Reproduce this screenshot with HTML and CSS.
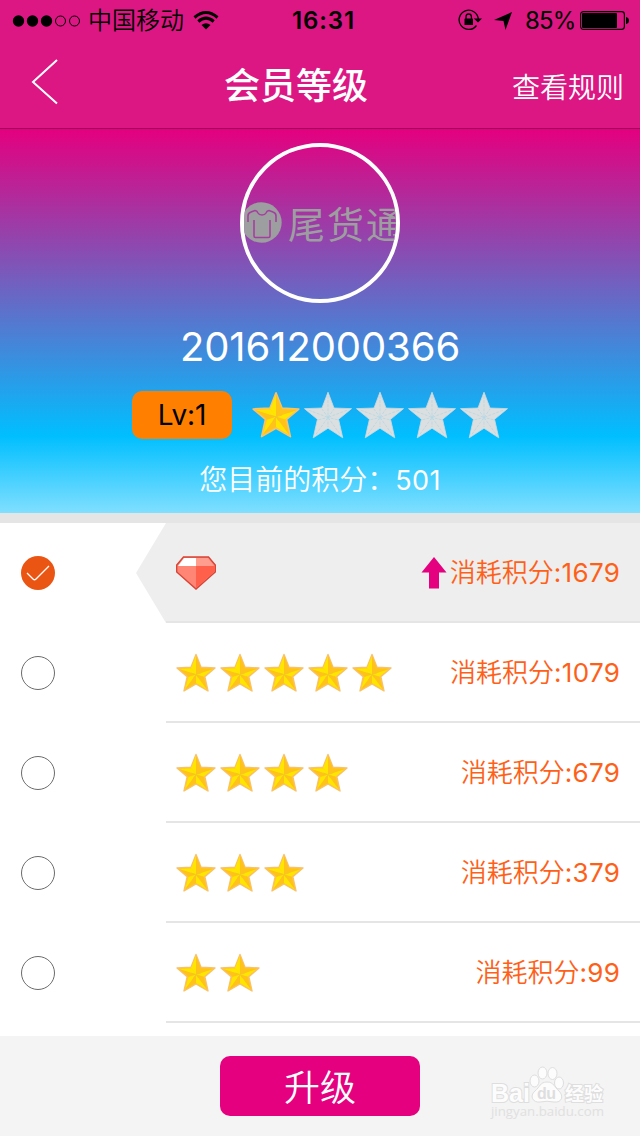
FILE: index.html
```html
<!DOCTYPE html>
<html lang="zh-CN">
<head>
<meta charset="utf-8">
<title>会员等级</title>
<link rel="stylesheet" href="styles.css">
</head>
<body>
<svg class="defs" width="0" height="0">
  <symbol id="star" viewBox="0 0 40 40">
    <path d="M20 1.500 25 14.200 39 15 28.800 23.600 32 38 20 31 8 38 11.200 23.600 1 15 15 14.200Z" fill="#ffcb12" stroke="#fac06a" stroke-width="1.400" stroke-linejoin="round"/>
    <path d="M20 3V21.500L15 15ZM37 16 20 21.500 27.500 23.500ZM31 36.500 20 21.500V30ZM9 36.500 20 21.500 12.500 24ZM3 16 20 21.500 15.500 15.300Z" fill="#ffe500"/>
    <path d="M20 3V21.500L25 15ZM37 16 20 21.500 25 15.300ZM31 36.500 20 21.500 27.500 24ZM9 36.500 20 21.500V30ZM3 16 20 21.500 12.500 23.500Z" fill="#ffc21a"/>
    <path d="M15 20 20 21.500 25 20M20 21.500 22.500 25M20 21.500 17.500 25" fill="none" stroke="#f0c826" stroke-width=".8"/>
  </symbol>
  <symbol id="star-off" viewBox="0 0 40 40">
    <path d="M20 1 25 14.200 39.600 14.700 28.800 23.600 32.300 39 20 31 7.700 39 11.200 23.600.4 14.700 15 14.200Z" fill="#dcdfe0" stroke="#c9d9e0" stroke-width=".7"/>
    <path d="M20 4V22L15 15M20 22 25 15M4 16 20 22 36 16M12 24 20 22 28 24M10 36 20 22 30 36M20 22V30" fill="none" stroke="#b9d8e5" stroke-width=".8" stroke-dasharray="2.500 1"/>
  </symbol>
</svg>

<header class="top">
  <div class="status">
    <svg class="signal" width="70" height="14" viewBox="0 0 70 14"><circle cx="6.500" cy="7" r="5.700"/><circle cx="20.500" cy="7" r="5.700"/><circle cx="34.500" cy="7" r="5.700"/><circle cx="48.500" cy="7" r="5" fill="none" stroke="#000"/><circle cx="62.500" cy="7" r="5" fill="none" stroke="#000"/></svg>
    <span class="carrier">中国移动</span>
    <svg class="wifi" width="26" height="20" viewBox="0 0 26 20"><g fill="none" stroke="#000" stroke-width="3"><path d="M1.500 7.500Q13-2.500 24.500 7.500"/><path d="M5.300 11.500Q13 4.800 20.700 11.500"/></g><path d="M8.500 15Q13 11.500 17.500 15L13 19.500Z"/></svg>
    <span class="clock">16:31</span>
    <svg class="lock" width="24" height="22" viewBox="0 0 24 22"><path d="M18.500 16.500A9.600 9.600 0 1 1 20.300 10" fill="none" stroke="#000" stroke-width="1.300"/><path d="M15.800 9.500H24L20 13.500Z"/><rect x="6.500" y="9.500" width="8.500" height="6.500" rx=".6"/><path d="M8 10V7.700a2.700 2.700 0 0 1 5.400 0V10" fill="none" stroke="#000" stroke-width="1.300"/></svg>
    <svg class="nav-arrow" width="18" height="18" viewBox="0 0 18 18"><path d="M18 0 11.500 18 9.500 9 0 8Z"/></svg>
    <span class="percent">85%</span>
    <svg class="battery" width="50" height="19" viewBox="0 0 50 19"><rect x=".6" y=".6" width="43.800" height="17.800" rx="2.800" fill="none" stroke="#000" stroke-width="1.200"/><rect x="2" y="2" width="35" height="15" rx="1"/><path d="M46 6q3 .5 3 3.500t-3 3.500Z"/></svg>
  </div>
  <nav class="nav">
    <svg class="back" width="28" height="46" viewBox="0 0 28 46"><path d="M26 1 2 23 26 44.500" fill="none" stroke="#fff" stroke-width="2"/></svg>
    <h1 class="title">会员等级</h1>
    <a class="rules">查看规则</a>
  </nav>
</header>

<section class="profile">
  <div class="avatar">
    <svg class="shirt" width="40" height="42" viewBox="0 0 40 42"><circle cx="19.500" cy="20.500" r="20.200" fill="#9d9ea0"/><path d="M12 18V34Q12 35.500 13.500 35.500H26.500Q28 35.500 28 34V18M6 20V14Q6 11 9 10L13 8.500Q15 8.500 16 11Q17 13 20 13T24 11Q25 8.500 27 8.500L31 10Q34 11 34 14V20" fill="none" stroke="#a43f9f" stroke-width="1.600"/></svg>
    <span class="brand">尾货通</span>
  </div>
  <div class="member">201612000366</div>
  <div class="level">
    <span class="badge">Lv:1</span>
    <div class="rating">
      <svg><use href="#star"/></svg><svg><use href="#star-off"/></svg><svg><use href="#star-off"/></svg><svg><use href="#star-off"/></svg><svg><use href="#star-off"/></svg>
    </div>
  </div>
  <div class="points">您目前的积分：<span class="points-value">501</span></div>
</section>

<main class="list">
  <div class="row selected">
    <svg class="radio" viewBox="0 0 34 34"><circle cx="17" cy="17" r="17" fill="#ea5514"/><path d="M6 17 12 23Q13.500 24.500 15 23L28 10" fill="none" stroke="#fff" stroke-width="1.300"/></svg>
    <div class="option">
      <svg class="gem" width="40" height="34" viewBox="0 0 40 34"><path d="M7.500 1H32.500L39.300 9V16L20 33 .7 16V9Z" fill="#ff8675" stroke="#d84436" stroke-width="1.400"/><path d="M8 2H20V10H2Z" fill="#fff"/><path d="M20 2H32L38 10H20Z" fill="#ff9d8f"/><path d="M20 10H38.500V15.500L20 32Z" fill="#ff604b"/></svg>
      <span class="cost"><svg class="up" width="26" height="32" viewBox="0 0 26 32"><path d="M13 0 25.500 15.500H18V31.500H8V15.500H.5Z" fill="#e4007f"/></svg><span class="label">消耗积分</span><span class="num">:1679</span></span>
    </div>
  </div>
  <div class="row">
    <svg class="radio" viewBox="0 0 34 34"><circle cx="17" cy="17" r="16.500" fill="none" stroke="#6b6b6b"/></svg>
    <div class="option"><div class="stars"><svg><use href="#star"/></svg><svg><use href="#star"/></svg><svg><use href="#star"/></svg><svg><use href="#star"/></svg><svg><use href="#star"/></svg></div><span class="cost"><span class="label">消耗积分</span><span class="num">:1079</span></span></div>
  </div>
  <div class="row">
    <svg class="radio" viewBox="0 0 34 34"><circle cx="17" cy="17" r="16.500" fill="none" stroke="#6b6b6b"/></svg>
    <div class="option"><div class="stars"><svg><use href="#star"/></svg><svg><use href="#star"/></svg><svg><use href="#star"/></svg><svg><use href="#star"/></svg></div><span class="cost"><span class="label">消耗积分</span><span class="num">:679</span></span></div>
  </div>
  <div class="row">
    <svg class="radio" viewBox="0 0 34 34"><circle cx="17" cy="17" r="16.500" fill="none" stroke="#6b6b6b"/></svg>
    <div class="option"><div class="stars"><svg><use href="#star"/></svg><svg><use href="#star"/></svg><svg><use href="#star"/></svg></div><span class="cost"><span class="label">消耗积分</span><span class="num">:379</span></span></div>
  </div>
  <div class="row">
    <svg class="radio" viewBox="0 0 34 34"><circle cx="17" cy="17" r="16.500" fill="none" stroke="#6b6b6b"/></svg>
    <div class="option"><div class="stars"><svg><use href="#star"/></svg><svg><use href="#star"/></svg></div><span class="cost"><span class="label">消耗积分</span><span class="num">:99</span></span></div>
  </div>
</main>

<footer class="footer">
  <button class="upgrade">升级</button>
  <svg class="watermark" width="120" height="60" viewBox="0 0 120 60">
    <g fill="#fcfcfc" stroke="#dedede" stroke-width="1">
      <ellipse cx="44.500" cy="17" rx="4.500" ry="6"/><ellipse cx="52.500" cy="9" rx="4.500" ry="6"/><ellipse cx="62.500" cy="9.500" rx="4.500" ry="6"/><ellipse cx="69" cy="19" rx="4.500" ry="6"/>
      <path d="M57 18C50 18 50 23 45 27C39 32 43 39 50 38Q57 36.500 64 38C72 39 74 32 69 27C64 23 64 18 57 18Z"/>
      <g class="wm-text" stroke-width="2">
        <text x="1" y="38" font-size="26" textLength="39" lengthAdjust="spacingAndGlyphs">Bai</text>
        <text x="75" y="37" font-size="19" textLength="38">经验</text>
      </g>
    </g>
    <text class="wm-url" x="1" y="52" textLength="113" lengthAdjust="spacingAndGlyphs">jingyan.baidu.com</text>
    <text class="wm-du" x="47" y="35" textLength="19">du</text>
  </svg>
</footer>
</body>
</html>
```

FILE: styles.css
```css
* { box-sizing: border-box; }
body {
  margin: 0;
  width: 640px;
  height: 1136px;
  overflow: hidden;
  display: flex;
  flex-direction: column;
  background: #fff;
  font-family: Inter, "Noto Sans CJK SC", sans-serif;
  white-space: nowrap;
}
svg { display: block; flex: none; }
.defs { position: absolute; }

.top { height: 129px; background: #dc1683; border-bottom: 1px solid #970f5a; }
.status { height: 41px; display: flex; align-items: center; padding-left: 12px; }
.carrier { font-size: 24px; line-height: 36px; width: 96px; margin: 1px 0 0 6px; font-weight: 350; }
.wifi { margin: -2px 0 0 9px; }
.clock { font-size: 24px; font-weight: 600; width: 66px; margin-left: 73px; letter-spacing: .9px; }
.lock { margin: -1px 0 0 100px; }
.nav-arrow { margin-left: 12px; }
.percent { font-size: 24px; width: 50px; margin-left: 13px; letter-spacing: -.9px; }
.battery { margin-left: 5px; }
.nav { height: 87px; display: grid; grid-template-columns: 193px 1fr 193px; align-items: center; padding: 0 16px 0 31px; }
.back { margin-top: -5px; }
.title { margin: 2px 0 0; color: #fff; font-size: 36px; font-weight: 500; line-height: 52px; }
.rules { color: #fff; font-size: 28px; font-weight: 350; text-align: right; margin-top: 2px; }

.profile {
  height: 384px;
  display: flex;
  flex-direction: column;
  align-items: center;
  padding-top: 14px;
  background: linear-gradient(#e4007f 0%, #00bfff 80%, #80dfff 100%);
  color: #fff;
}
.avatar { width: 160px; height: 160px; flex: none; border: 4px solid #fff; border-radius: 50%; display: flex; align-items: center; overflow: hidden; }
.shirt { margin-left: -2px; }
.brand { color: #9d9ea0; font-size: 37px; font-weight: 400; letter-spacing: 2px; margin-left: 6px; }
.member { font-size: 40px; line-height: 48px; margin-top: 20px; letter-spacing: -.1px; }
.level { width: 376px; display: flex; margin-top: 20px; }
.badge { width: 100px; height: 48px; flex: none; border-radius: 10px; background: #ff8000; color: #000; font-size: 28px; line-height: 49px; text-align: center; letter-spacing: -.2px; }
.rating { display: flex; gap: 4px; margin-left: 20px; }
.rating svg { width: 48px; height: 48px; }
.points { margin-top: 21px; font-size: 28px; font-weight: 350; line-height: 40px; }
.points-value { font-size: 27px; font-weight: 400; letter-spacing: .4px; }

.list { height: 523px; border-top: 10px solid #e5e5e5; }
.row { height: 100px; display: flex; align-items: center; padding-left: 21px; }
.radio { width: 34px; height: 34px; }
.option { height: 100px; flex: 1; margin-left: 111px; display: flex; align-items: center; justify-content: space-between; padding: 0 20px 0 10px; border-bottom: 2px solid #e5e5e5; }
.selected .option { position: relative; background: #eee; }
.selected .option::before { content: ""; position: absolute; left: -30px; top: 0; width: 30px; height: 100px; background: #eee; clip-path: polygon(100% 0, 100% 100%, 0 50%); }
.stars { display: flex; gap: 4px; margin-top: 2px; }
.stars svg { width: 40px; height: 40px; }
.gem { margin-top: 2px; }
.cost { display: flex; align-items: center; color: #ff6018; font-size: 26px; font-weight: 350; line-height: 36px; padding-top: 2px; }
.num { font-weight: 400; letter-spacing: .35px; margin-right: -.3px; }
.up { margin-right: 3px; }

.footer { height: 100px; background: #f4f4f4; display: flex; align-items: center; padding-left: 220px; }
.upgrade { width: 200px; height: 60px; border: 0; border-radius: 10px; background: #e4007f; color: #fff; font: 350 36px/58px "Noto Sans CJK SC", sans-serif; padding: 0 0 2px; }
.watermark { margin: 16px 0 0 70px; }
.wm-text { font-family: "Liberation Sans", "Noto Sans CJK SC", sans-serif; font-weight: 700; paint-order: stroke; }
.wm-url { font-family: "Open Sans", sans-serif; font-size: 13px; fill: #e0e0e0; }
.wm-du { font-family: "Liberation Sans", sans-serif; font-size: 16px; font-weight: 700; fill: #dedede; }
```
